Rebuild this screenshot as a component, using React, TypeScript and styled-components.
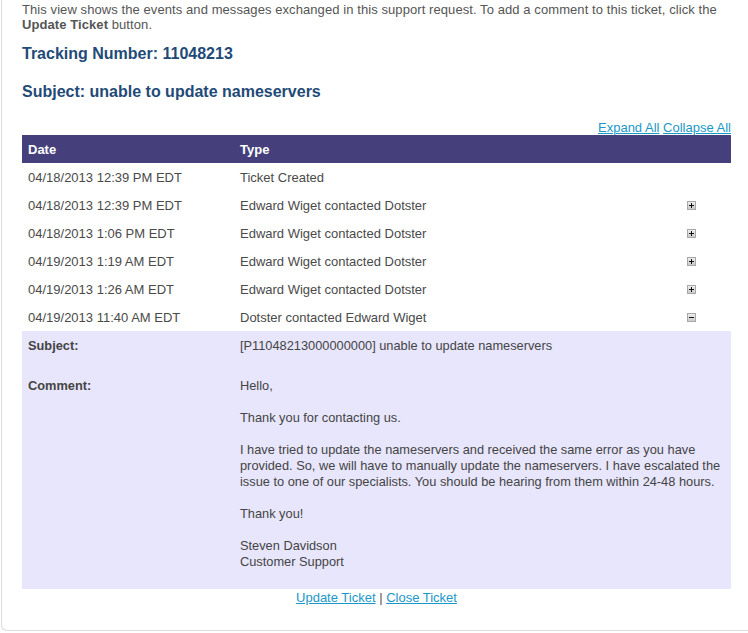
import styled, { createGlobalStyle } from "styled-components";

const GlobalStyle = createGlobalStyle`
  body {
    margin: 0;
    background: #ffffff;
    font-family: "Liberation Sans", Arial, sans-serif;
    overflow: hidden;
  }
`;

const Page = styled.div`
  margin-left: 1px;
  width: 747px;
  height: 631px;
  border-left: 1px solid #dcdcdc;
  border-bottom: 1px solid #dcdcdc;
  border-bottom-left-radius: 6px;
  padding: 2px 0 0 20px;
  box-sizing: border-box;
  color: #4a4a4a;
  font-size: 13px;
`;

const Content = styled.div`
  width: 709px;
`;

const Intro = styled.p`
  margin: 0;
  width: 718px;
  line-height: 15px;
  font-size: 13px;
  letter-spacing: 0.08px;
  color: #555555;
`;

const Heading = styled.h2<{ $top: number }>`
  margin: 0;
  font-size: 16px;
  line-height: 20px;
  font-weight: bold;
  color: #1f4a78;
  margin-top: ${(p) => p.$top}px;
`;

const ToggleLinks = styled.div`
  margin-top: 19px;
  text-align: right;
  line-height: 14px;
  font-size: 13px;
`;

const Link = styled.a`
  color: #1b98c8;
  text-decoration: underline;
  cursor: pointer;
`;

const Table = styled.table`
  width: 100%;
  border-collapse: collapse;
  margin-top: 0;
`;

const HeadCell = styled.th<{ $width?: number }>`
  background: #45407c;
  color: #ffffff;
  font-weight: bold;
  text-align: left;
  height: 28px;
  padding: 0 0 0 6px;
  font-size: 13px;
  width: ${(p) => (p.$width ? `${p.$width}px` : "auto")};
`;

const Cell = styled.td`
  height: 28px;
  padding: 0 0 0 6px;
  vertical-align: middle;
  font-size: 13px;
  color: #4a4a4a;
`;

const IconCell = styled.td`
  width: 44px;
  height: 28px;
  padding: 0;
  vertical-align: middle;
  line-height: 0;
`;

const DetailCell = styled.td`
  padding: 0;
  background: #e8e6fc;
`;

const Detail = styled.div`
  display: grid;
  grid-template-columns: 212px 1fr;
  row-gap: 24px;
  padding: 7px 2px 19px 6px;
  line-height: 16px;
  font-size: 12.8px;
  color: #444444;
`;

const Label = styled.div`
  font-weight: bold;
`;

const Para = styled.p`
  margin: 0 0 16px 0;
  &:last-child {
    margin-bottom: 0;
  }
`;

const Footer = styled.div`
  text-align: center;
  line-height: 16px;
  margin-top: 1px;
  color: #555555;
`;

type ToggleProps = { open: boolean };

const ToggleIcon = ({ open }: ToggleProps) => (
  <svg width="9" height="9" viewBox="0 0 9 9">
    <defs>
      <linearGradient id="tg" x1="0" y1="0" x2="0" y2="1">
        <stop offset="0" stopColor="#f0f0f0" />
        <stop offset="1" stopColor="#c8c8c8" />
      </linearGradient>
    </defs>
    <rect x="0.5" y="0.5" width="8" height="8" fill="url(#tg)" stroke="#a8a8a8" />
    <rect x="2" y="4" width="5" height="1" fill="#111" />
    {!open && <rect x="4" y="2" width="1" height="5" fill="#111" />}
  </svg>
);

const events = [
  { date: "04/18/2013 12:39 PM EDT", type: "Ticket Created", toggle: null },
  { date: "04/18/2013 12:39 PM EDT", type: "Edward Wiget contacted Dotster", toggle: false },
  { date: "04/18/2013 1:06 PM EDT", type: "Edward Wiget contacted Dotster", toggle: false },
  { date: "04/19/2013 1:19 AM EDT", type: "Edward Wiget contacted Dotster", toggle: false },
  { date: "04/19/2013 1:26 AM EDT", type: "Edward Wiget contacted Dotster", toggle: false },
  { date: "04/19/2013 11:40 AM EDT", type: "Dotster contacted Edward Wiget", toggle: true },
];

const App = () => {
  return (
    <>
      <GlobalStyle />
      <Page>
        <Content>
          <Intro>
            This view shows the events and messages exchanged in this support request. To add a
            comment to this ticket, click the <b>Update Ticket</b> button.
          </Intro>
          <Heading $top={12}>Tracking Number: 11048213</Heading>
          <Heading $top={18}>Subject: unable to update nameservers</Heading>
          <ToggleLinks>
            <Link>Expand All</Link> <Link>Collapse All</Link>
          </ToggleLinks>
          <Table>
            <thead>
              <tr>
                <HeadCell $width={206}>Date</HeadCell>
                <HeadCell>Type</HeadCell>
                <HeadCell />
              </tr>
            </thead>
            <tbody>
              {events.map((e, i) => (
                <tr key={i}>
                  <Cell>{e.date}</Cell>
                  <Cell>{e.type}</Cell>
                  <IconCell>{e.toggle !== null && <ToggleIcon open={e.toggle} />}</IconCell>
                </tr>
              ))}
              <tr>
                <DetailCell colSpan={3}>
                  <Detail>
                    <Label>Subject:</Label>
                    <div>[P11048213000000000] unable to update nameservers</div>
                    <Label>Comment:</Label>
                    <div>
                      <Para>Hello,</Para>
                      <Para>Thank you for contacting us.</Para>
                      <Para>
                        I have tried to update the nameservers and received the same error as you
                        have provided. So, we will have to manually update the nameservers. I have
                        escalated the issue to one of our specialists. You should be hearing from
                        them within 24-48 hours.
                      </Para>
                      <Para>Thank you!</Para>
                      <Para>
                        Steven Davidson
                        <br />
                        Customer Support
                      </Para>
                    </div>
                  </Detail>
                </DetailCell>
              </tr>
            </tbody>
          </Table>
          <Footer>
            <Link>Update Ticket</Link> | <Link>Close Ticket</Link>
          </Footer>
        </Content>
      </Page>
    </>
  );
};

export default App;
